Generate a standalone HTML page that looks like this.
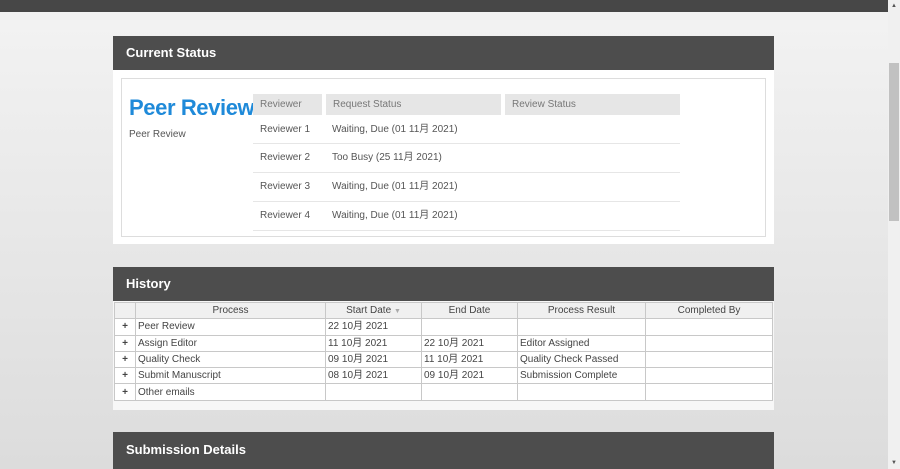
<!DOCTYPE html>
<html><head><meta charset="utf-8"><style>
*{margin:0;padding:0;box-sizing:border-box}
body{width:900px;height:469px;overflow:hidden;background:linear-gradient(#f3f3f3,#dcdcdc);font-family:"Liberation Sans","Noto Sans CJK SC",sans-serif;position:relative;color:#444}
.a{position:absolute}
.hd{background:#4d4d4d;color:#fff;font-weight:bold;font-size:13px;padding-left:13px;height:34px;line-height:34px;left:113px;width:661px}
.t{font-size:10px;color:#555;line-height:12px;height:12px;white-space:nowrap}
table{border-collapse:collapse}
.h td{border:1px solid #c8c8c8;font-size:10px;line-height:12px;color:#444;height:16.3px;padding:1px 2px 0;white-space:nowrap;vertical-align:middle}
.h td span.c{display:inline-block;height:12px;line-height:12px;vertical-align:top}
.h tr:first-child td{background:#f0f0f0;text-align:center}
.p{text-align:center;font-weight:bold;font-size:11px}
</style></head><body>
<div class="a" style="left:0;top:0;width:888px;height:12px;background:#474747"></div>
<div class="a" style="left:888px;top:0;width:12px;height:469px;background:#f0f0f0"></div>
<div class="a" style="left:889px;top:63px;width:10px;height:158px;background:#c1c1c1"></div>
<div class="a" style="left:891px;top:3px;font-size:6px;color:#555">▲</div>
<div class="a" style="left:891px;top:460px;font-size:6px;color:#555">▼</div>

<div class="a hd" style="top:36px">Current Status</div>
<div class="a" style="left:113px;top:70px;width:661px;height:174px;background:#fff"></div>
<div class="a" style="left:121px;top:78px;width:645px;height:159px;border:1px solid #ddd"></div>
<div class="a" style="left:129px;top:95px;font-size:22px;line-height:26px;font-weight:bold;color:#1f8ad9;letter-spacing:-0.4px">Peer Review</div>
<div class="a t" style="left:129px;top:129px">Peer Review</div>
<div class="a" style="left:253px;top:94px;width:69px;height:21px;background:#e6e6e6"></div>
<div class="a" style="left:326px;top:94px;width:175px;height:21px;background:#e6e6e6"></div>
<div class="a" style="left:505px;top:94px;width:175px;height:21px;background:#e6e6e6"></div>
<div class="a t" style="left:260px;top:99px;color:#777">Reviewer</div>
<div class="a t" style="left:333px;top:99px;color:#777">Request Status</div>
<div class="a t" style="left:512px;top:99px;color:#777">Review Status</div>
<div class="a" style="left:253px;top:143px;width:427px;border-top:1px solid #e6e6e6"></div>
<div class="a" style="left:253px;top:172px;width:427px;border-top:1px solid #e6e6e6"></div>
<div class="a" style="left:253px;top:201px;width:427px;border-top:1px solid #e6e6e6"></div>
<div class="a" style="left:253px;top:230px;width:427px;border-top:1px solid #e6e6e6"></div>
<div class="a t" style="left:260px;top:124px">Reviewer 1</div><div class="a t" style="left:332px;top:124px">Waiting, Due (01 11月 2021)</div>
<div class="a t" style="left:260px;top:152px">Reviewer 2</div><div class="a t" style="left:332px;top:152px">Too Busy (25 11月 2021)</div>
<div class="a t" style="left:260px;top:181px">Reviewer 3</div><div class="a t" style="left:332px;top:181px">Waiting, Due (01 11月 2021)</div>
<div class="a t" style="left:260px;top:210px">Reviewer 4</div><div class="a t" style="left:332px;top:210px">Waiting, Due (01 11月 2021)</div>

<div class="a hd" style="top:267px">History</div>
<div class="a" style="left:113px;top:301px;width:661px;height:109px;background:#f7f7f7"></div>
<table class="a h" style="left:114px;top:302px;width:659px;background:#fff">
<tr><td style="width:21px"></td><td style="width:190px"><span class="c">Process</span></td><td style="width:96px"><span class="c">Start Date <span style="color:#aaa;font-size:7px">▼</span></span></td><td style="width:96px"><span class="c">End Date</span></td><td style="width:128px"><span class="c">Process Result</span></td><td><span class="c">Completed By</span></td></tr>
<tr><td class="p">+</td><td><span class="c">Peer Review</span></td><td><span class="c">22 10月 2021</span></td><td></td><td></td><td></td></tr>
<tr><td class="p">+</td><td><span class="c">Assign Editor</span></td><td><span class="c">11 10月 2021</span></td><td><span class="c">22 10月 2021</span></td><td><span class="c">Editor Assigned</span></td><td></td></tr>
<tr><td class="p">+</td><td><span class="c">Quality Check</span></td><td><span class="c">09 10月 2021</span></td><td><span class="c">11 10月 2021</span></td><td><span class="c">Quality Check Passed</span></td><td></td></tr>
<tr><td class="p">+</td><td><span class="c">Submit Manuscript</span></td><td><span class="c">08 10月 2021</span></td><td><span class="c">09 10月 2021</span></td><td><span class="c">Submission Complete</span></td><td></td></tr>
<tr><td class="p">+</td><td><span class="c">Other emails</span></td><td></td><td></td><td></td><td></td></tr>
</table>

<div class="a hd" style="top:432px;height:37px;line-height:36px">Submission Details</div>
</body></html>
